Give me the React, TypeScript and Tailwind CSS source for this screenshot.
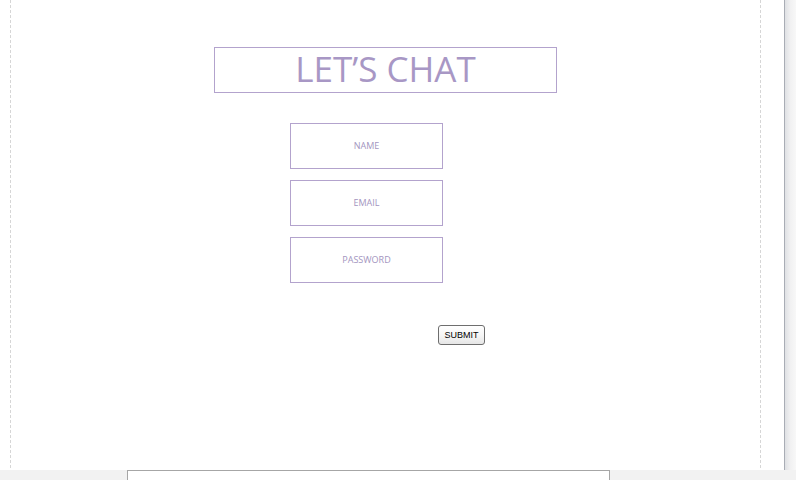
import React from "react";

export default function App() {
  return (
    <div className="w-[796px] h-[480px] bg-white flex flex-col overflow-hidden" style={{ fontFamily: '"Open Sans", sans-serif' }}>
      <div className="flex h-[470px]">
        <div className="w-[784px] h-full bg-white pl-[10px] pb-[2px]">
          <div className="w-[751px] h-full border-l border-r border-dashed border-[#d6d6d6] flex flex-col items-center">
            <div className="mt-[47px] w-[343px] h-[46px] border border-[#b3a3cd] flex items-center justify-center pb-[4px]">
              <span className="text-[35px] leading-none text-[#a897c5]" style={{ fontFamily: '"Open Sans", sans-serif' }}>LET’S CHAT</span>
            </div>
            <div className="mt-[30px] flex flex-col gap-[11px] mr-[38px]">
              {["NAME", "EMAIL", "PASSWORD"].map((t) => (
                <div key={t} className="w-[153px] h-[46px] border border-[#b3a3cd] flex items-center justify-center">
                  <span className="text-[9px] text-[#a395c0]">{t}</span>
                </div>
              ))}
            </div>
            <div className="mt-[42px] ml-[152px]">
              <div className="w-[47px] h-[20px] border border-[#6e6e6e] rounded-[3px] bg-gradient-to-b from-white via-[#f6f6f6] to-[#e6e6e6] flex items-center justify-center">
                <span className="text-[9px] text-black leading-none" style={{ fontFamily: '"Liberation Sans", Arial, sans-serif' }}>SUBMIT</span>
              </div>
            </div>
          </div>
        </div>
        <div className="w-[12px] h-full flex">
          <div className="w-[1px] h-full bg-[#a9adb5]" />
          <div className="flex-1 h-full bg-gradient-to-r from-[#dfe1e4] via-[#f1f1f2] to-[#f8f8f8]" />
        </div>
      </div>
      <div className="h-[10px] bg-[#f2f2f2] pl-[127px]">
        <div className="w-[483px] h-full bg-white border-t border-l border-r border-[#a6a6a6]" />
      </div>
    </div>
  );
}
